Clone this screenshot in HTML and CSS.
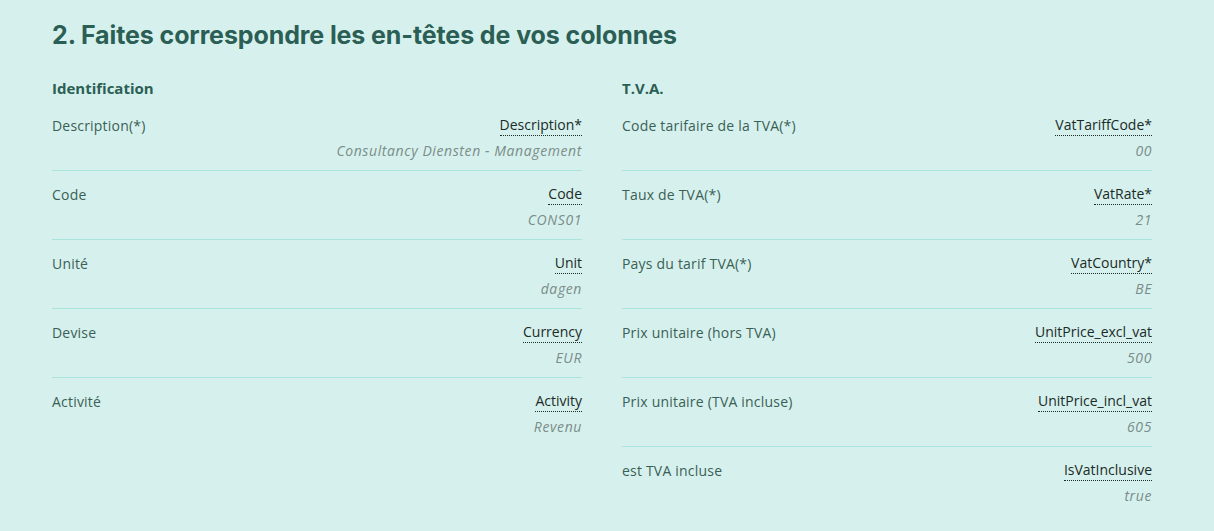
FILE: index.html
```html
<!DOCTYPE html>
<html lang="fr">

    <head>
        <meta charset="UTF-8">
        <meta name="viewport" content="width=device-width, initial-scale=1.0">
        <title>Correspondance des colonnes</title>
        <link rel="stylesheet" href="styles.css">
    </head>

    <body>

        <div class="holder">
            <h2 class="title">2. Faites correspondre les en-têtes de vos colonnes</h2>

            <div class="groups">
                <div class="group">
                    <h3 class="group-name">Identification</h3>
                    <div class="map">
                        <div class="label">Description(*)</div>
                        <div class="target">
                            <span class="field">Description*</span>
                            <span class="sample">Consultancy Diensten - Management</span>
                        </div>
                    </div>
                    <div class="map">
                        <div class="label">Code</div>
                        <div class="target">
                            <span class="field">Code</span>
                            <span class="sample">CONS01</span>
                        </div>
                    </div>
                    <div class="map">
                        <div class="label">Unité</div>
                        <div class="target">
                            <span class="field">Unit</span>
                            <span class="sample">dagen</span>
                        </div>
                    </div>
                    <div class="map">
                        <div class="label">Devise</div>
                        <div class="target">
                            <span class="field">Currency</span>
                            <span class="sample">EUR</span>
                        </div>
                    </div>
                    <div class="map">
                        <div class="label">Activité</div>
                        <div class="target">
                            <span class="field">Activity</span>
                            <span class="sample">Revenu</span>
                        </div>
                    </div>
                </div>

                <div class="group">
                    <h3 class="group-name">T.V.A.</h3>
                    <div class="map">
                        <div class="label">Code tarifaire de la TVA(*)</div>
                        <div class="target">
                            <span class="field">VatTariffCode*</span>
                            <span class="sample">00</span>
                        </div>
                    </div>
                    <div class="map">
                        <div class="label">Taux de TVA(*)</div>
                        <div class="target">
                            <span class="field">VatRate*</span>
                            <span class="sample">21</span>
                        </div>
                    </div>
                    <div class="map">
                        <div class="label">Pays du tarif TVA(*)</div>
                        <div class="target">
                            <span class="field">VatCountry*</span>
                            <span class="sample">BE</span>
                        </div>
                    </div>
                    <div class="map">
                        <div class="label">Prix unitaire (hors TVA)</div>
                        <div class="target">
                            <span class="field">UnitPrice_excl_vat</span>
                            <span class="sample">500</span>
                        </div>
                    </div>
                    <div class="map">
                        <div class="label">Prix unitaire (TVA incluse)</div>
                        <div class="target">
                            <span class="field">UnitPrice_incl_vat</span>
                            <span class="sample">605</span>
                        </div>
                    </div>
                    <div class="map">
                        <div class="label">est TVA incluse</div>
                        <div class="target">
                            <span class="field">IsVatInclusive</span>
                            <span class="sample">true</span>
                        </div>
                    </div>
                </div>
            </div>
        </div>

    </body>

</html>
```

FILE: styles.css
```css
:root {
    --bg: #d6f1ed;
    --title: #2b5e54;
    --label: #3b5f57;
    --field: #1b2b28;
    --sample: #7b8c89;
    --line: #a9e5dc;
}

body {
    margin: 0;
    background-color: var(--bg);
    font-family: 'Open Sans', 'Liberation Sans', sans-serif;
}

.holder {
    padding: 18px 62px 20px 52px;
}

.title {
    margin: 0;
    font-family: 'Inter', sans-serif;
    font-size: 25px;
    font-weight: 700;
    line-height: 34px;
    color: var(--title);
    letter-spacing: -0.1px;
}

.groups {
    margin-top: 25px;
    display: grid;
    grid-template-columns: 530px 530px;
    column-gap: 40px;
    align-items: start;
}

.group-name {
    margin: 0 0 3px;
    font-size: 15px;
    font-weight: 700;
    line-height: 22px;
    color: var(--title);
}

.map {
    display: flex;
    justify-content: space-between;
    padding: 13px 0 8px;
}

.map + .map {
    border-top: 1px solid var(--line);
}

.label {
    font-size: 14px;
    line-height: 22px;
    letter-spacing: 0.2px;
    color: var(--label);
}

.target {
    display: flex;
    flex-direction: column;
    align-items: flex-end;
    gap: 3px;
}

.field {
    font-size: 14px;
    line-height: 20px;
    color: var(--field);
    border-bottom: 1px dotted var(--field);
    margin-bottom: 1px;
}

.sample {
    font-size: 14px;
    line-height: 22px;
    font-style: italic;
    letter-spacing: 0.6px;
    color: var(--sample);
}
```
